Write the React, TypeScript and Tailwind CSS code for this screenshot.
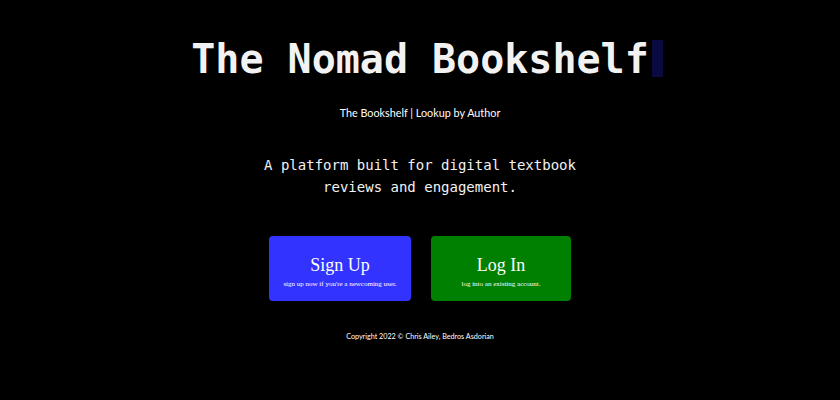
export default function App() {
  return (
    <div className="min-h-[400px] w-full bg-black text-white flex flex-col items-center">
      {/* Title */}
      <h1 className="relative mt-[35px] font-['DejaVu_Sans_Mono',monospace] text-[40px] font-bold leading-[48px] text-[#f2f2f2]">
        The Nomad Bookshelf
        <span className="absolute left-full top-[5px] ml-[3px] h-[37px] w-[11px] bg-[#0a0a40]" />
      </h1>

      {/* Nav */}
      <nav className="mt-[22px] font-['Lato',sans-serif] text-[10.8px] text-white">
        <a href="#">The Bookshelf</a> | <a href="#">Lookup by Author</a>
      </nav>

      {/* Tagline */}
      <p className="mt-[33px] text-center font-['DejaVu_Sans_Mono',monospace] text-[14px] leading-[22px] text-[#f2f2f2]">
        A platform built for digital textbook
        <br />
        reviews and engagement.
      </p>

      {/* Buttons */}
      <div className="mt-[38px] flex gap-[20px] font-['Liberation_Serif',serif]">
        <a
          href="#"
          className="flex h-[65px] w-[142px] flex-col items-center pt-[18px] rounded-[4px] bg-[#3333ff]"
        >
          <span className="text-[18px] leading-[22px]">Sign Up</span>
          <span className="mt-[4px] text-[7px] leading-[9px]">sign up now if you're a newcoming user.</span>
        </a>
        <a
          href="#"
          className="flex h-[65px] w-[140px] flex-col items-center pt-[18px] rounded-[4px] bg-[#008000]"
        >
          <span className="text-[18px] leading-[22px]">Log In</span>
          <span className="mt-[4px] text-[7px] leading-[9px]">log into an existing account.</span>
        </a>
      </div>

      {/* Footer */}
      <footer className="mt-[31px] font-['Lato',sans-serif] text-[7.2px] text-white">
        Copyright 2022 © Chris Ailey, Bedros Asdorian
      </footer>
    </div>
  );
}
